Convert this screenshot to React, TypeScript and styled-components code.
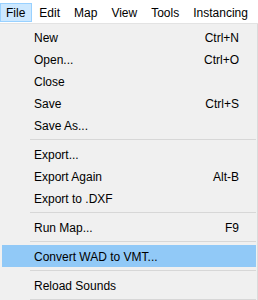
import styled, { createGlobalStyle } from 'styled-components';

const GlobalStyle = createGlobalStyle`
  html, body {
    margin: 0;
    padding: 0;
    background: #ffffff;
  }
  body {
    font-family: "Liberation Sans", Arial, sans-serif;
    font-size: 12px;
    color: #000;
  }
`;

type Entry = { label: string; shortcut?: string; active?: boolean } | 'sep';

const topMenus = ['File', 'Edit', 'Map', 'View', 'Tools', 'Instancing'];

const entries: Entry[] = [
  { label: 'New', shortcut: 'Ctrl+N' },
  { label: 'Open...', shortcut: 'Ctrl+O' },
  { label: 'Close' },
  { label: 'Save', shortcut: 'Ctrl+S' },
  { label: 'Save As...' },
  'sep',
  { label: 'Export...' },
  { label: 'Export Again', shortcut: 'Alt-B' },
  { label: 'Export to .DXF' },
  'sep',
  { label: 'Run Map...', shortcut: 'F9' },
  'sep',
  { label: 'Convert WAD to VMT...', active: true },
  'sep',
  { label: 'Reload Sounds' },
  'sep',
];

const App = () => {
  return (
    <>
      <GlobalStyle />
      <Window>
        <MenuBar>
          {topMenus.map((m, i) => (
            <MenuBarItem key={m} $open={i === 0}>
              {m}
            </MenuBarItem>
          ))}
        </MenuBar>
        <Dropdown>
          {entries.map((e, i) =>
            e === 'sep' ? (
              <Separator key={i} />
            ) : (
              <Item key={i} $active={!!e.active}>
                <span>{e.label}</span>
                {e.shortcut && <Shortcut>{e.shortcut}</Shortcut>}
              </Item>
            )
          )}
        </Dropdown>
      </Window>
    </>
  );
};

export default App;

const Window = styled.div`
  width: 258px;
  height: 300px;
  overflow: hidden;
  display: flex;
  flex-direction: column;
  background: #ffffff;
`;

const MenuBar = styled.div`
  height: 24px;
  box-sizing: border-box;
  padding-top: 3px;
  display: flex;
  align-items: flex-start;
  background: #ffffff;
  border-bottom: 1px solid #e3e3e3;
  flex: none;
`;

const MenuBarItem = styled.div<{ $open: boolean }>`
  height: 19px;
  box-sizing: border-box;
  padding: 1px 6px 0;
  display: flex;
  align-items: center;
  white-space: nowrap;
  border: 1px solid ${p => (p.$open ? '#99d1ff' : 'transparent')};
  background: ${p => (p.$open ? '#cce8ff' : 'transparent')};
  &:first-child {
    padding-left: 5px;
    padding-right: 6px;
  }
`;

const Dropdown = styled.div`
  flex: 1;
  background: #f0f0f0;
  padding: 2px 1px 0 2px;
  border-right: 1px solid #dadada;
  display: flex;
  flex-direction: column;
`;

const Item = styled.div<{ $active: boolean }>`
  height: 22px;
  flex: none;
  display: flex;
  align-items: center;
  justify-content: space-between;
  padding: 1px 17px 0 32px;
  box-sizing: border-box;
  background: ${p => (p.$active ? '#91c9f7' : 'transparent')};
`;

const Shortcut = styled.span`
  white-space: nowrap;
`;

const Separator = styled.div`
  flex: none;
  height: 1px;
  margin: 3px 0 3px 28px;
  background: #d7d7d7;
`;
